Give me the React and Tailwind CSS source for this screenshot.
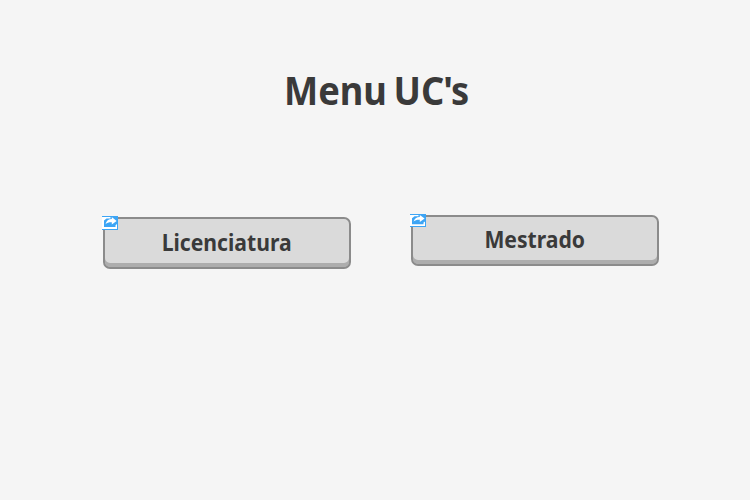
function LinkBadge({ height }) {
  return (
    <svg
      className="absolute -left-[3px] -top-[3px] w-4"
      style={{ height }}
      viewBox="0 0 16 14"
      preserveAspectRatio="none"
      aria-hidden="true"
    >
      <rect width="16" height="14" fill="#fff" />
      <path d="M0 0H16V14H0V13H15V8L13.5 9.2V11H2V4.5L4.5 2.5H8.5V1H0Z" fill="#3da5f5" />
      <path d="M9 0H16V4.5L12 1H9Z" fill="#3da5f5" />
      <path d="M3.5 8.2C4.3 4.8 6.5 3.2 9.8 3.1V1L14.6 4.9L9.8 8.6V6.3C7 6.2 5.2 6.7 3.5 8.2Z" fill="#fff" />
    </svg>
  );
}

function MenuButton({ label, className, labelClassName, badgeHeight }) {
  return (
    <button
      type="button"
      className={`relative flex w-[248px] justify-center rounded-[7px] border-2 border-[#8b8b8b] bg-[#dadada] shadow-[inset_0_-4px_0_#adadad] ${className}`}
    >
      <span className={`block whitespace-nowrap text-[23px] font-bold leading-8 ${labelClassName}`}>
        {label}
      </span>
      <LinkBadge height={badgeHeight} />
    </button>
  );
}

export default function App() {
  return (
    <main className="flex h-[500px] w-[750px] flex-col bg-[#f5f5f5] font-['Noto_Sans',sans-serif] text-[#3a3a3a]">
      <h1 className="ml-[2px] mt-[62px] flex h-14 justify-center text-[39px] font-bold leading-[56px]">
        <span className="block scale-x-[0.93] whitespace-nowrap [word-spacing:-3px]">
          Menu U<span className="tracking-[-1px]">C's</span>
        </span>
      </h1>
      <nav className="mt-[97px] flex gap-[60px] pl-[103px]">
        <MenuButton label="Licenciatura" className="mt-[2px] h-[52px] pt-[7px]" labelClassName="scale-x-[0.92]" badgeHeight={14} />
        <MenuButton label="Mestrado" className="h-[51px] pt-[6px]" labelClassName="scale-x-[0.92]" badgeHeight={13} />
      </nav>
    </main>
  );
}
